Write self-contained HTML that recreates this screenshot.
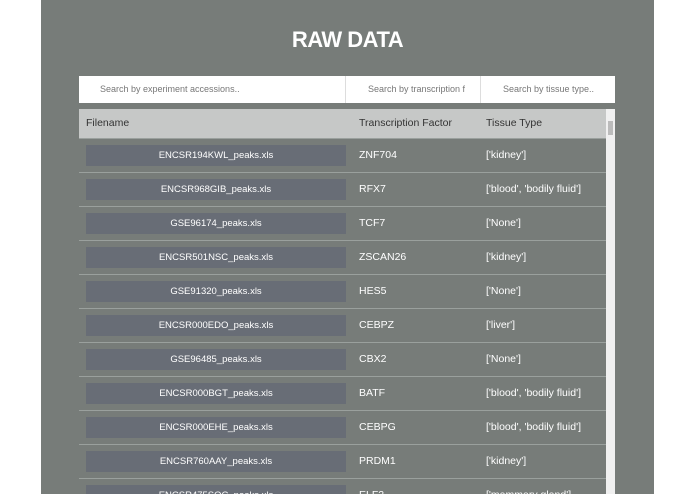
<!DOCTYPE html>
<html><head><style>
body{margin:0;background:#fff;width:695px;height:494px;overflow:hidden;font-family:"Liberation Sans",sans-serif;}
.panel{position:absolute;left:41px;top:0;width:613px;height:494px;background:#777c79;}
h1{position:absolute;left:0;width:100%;top:27px;margin:0;text-align:center;color:#fff;font-size:22px;font-weight:bold;letter-spacing:-0.5px;}
.search{position:absolute;left:38px;top:76px;width:536px;height:27px;background:#fff;font-size:9px;color:#777;}
.search div{position:absolute;top:0;height:27px;line-height:27px;border-right:1px solid #ddd;overflow:hidden;white-space:nowrap;}
.tbl{position:absolute;left:38px;top:109px;width:536px;height:385px;overflow:hidden;}
.hdr{position:absolute;left:0;top:0;width:527px;height:29px;background:#c6c8c7;font-size:10.5px;color:#333;}
.hdr span,.row span{position:absolute;top:0;}
.hdr span{line-height:29px;}
.sb{position:absolute;left:527px;top:0;width:9px;height:385px;background:#f0f0f0;}
.sb i{position:absolute;left:2px;top:12px;width:5px;height:14px;background:#bbb;}
.row{position:absolute;left:0;width:527px;height:33px;border-top:1px solid #9aa09d;font-size:10.5px;color:#fff;}
.row span{line-height:33px;}
.row b{position:absolute;left:7px;top:6px;width:260px;height:21px;background:#686d76;font-weight:normal;font-size:9.5px;text-align:center;line-height:21px;}
</style></head><body>
<div class="panel">
<h1>RAW DATA</h1>
<div class="search">
<div style="left:0;width:267px;padding-left:21px;box-sizing:border-box">Search by experiment accessions..</div>
<div style="left:268px;width:134px;padding-left:21px;box-sizing:border-box">Search by transcription f</div>
<div style="left:403px;width:133px;padding-left:21px;box-sizing:border-box;border:none">Search by tissue type..</div>
</div>
<div class="tbl">
<div class="hdr"><span style="left:7px">Filename</span><span style="left:280px">Transcription Factor</span><span style="left:407px">Tissue Type</span></div>
<div class="sb"><i></i></div>
<div class="row" style="top:29px"><b>ENCSR194KWL_peaks.xls</b><span style="left:280px">ZNF704</span><span style="left:407px">['kidney']</span></div>
<div class="row" style="top:63px"><b>ENCSR968GIB_peaks.xls</b><span style="left:280px">RFX7</span><span style="left:407px">['blood', 'bodily fluid']</span></div>
<div class="row" style="top:97px"><b>GSE96174_peaks.xls</b><span style="left:280px">TCF7</span><span style="left:407px">['None']</span></div>
<div class="row" style="top:131px"><b>ENCSR501NSC_peaks.xls</b><span style="left:280px">ZSCAN26</span><span style="left:407px">['kidney']</span></div>
<div class="row" style="top:165px"><b>GSE91320_peaks.xls</b><span style="left:280px">HES5</span><span style="left:407px">['None']</span></div>
<div class="row" style="top:199px"><b>ENCSR000EDO_peaks.xls</b><span style="left:280px">CEBPZ</span><span style="left:407px">['liver']</span></div>
<div class="row" style="top:233px"><b>GSE96485_peaks.xls</b><span style="left:280px">CBX2</span><span style="left:407px">['None']</span></div>
<div class="row" style="top:267px"><b>ENCSR000BGT_peaks.xls</b><span style="left:280px">BATF</span><span style="left:407px">['blood', 'bodily fluid']</span></div>
<div class="row" style="top:301px"><b>ENCSR000EHE_peaks.xls</b><span style="left:280px">CEBPG</span><span style="left:407px">['blood', 'bodily fluid']</span></div>
<div class="row" style="top:335px"><b>ENCSR760AAY_peaks.xls</b><span style="left:280px">PRDM1</span><span style="left:407px">['kidney']</span></div>
<div class="row" style="top:369px"><b>ENCSR475SOC_peaks.xls</b><span style="left:280px">ELF2</span><span style="left:407px">['mammary gland']</span></div>
</div>
</div>
</body></html>
